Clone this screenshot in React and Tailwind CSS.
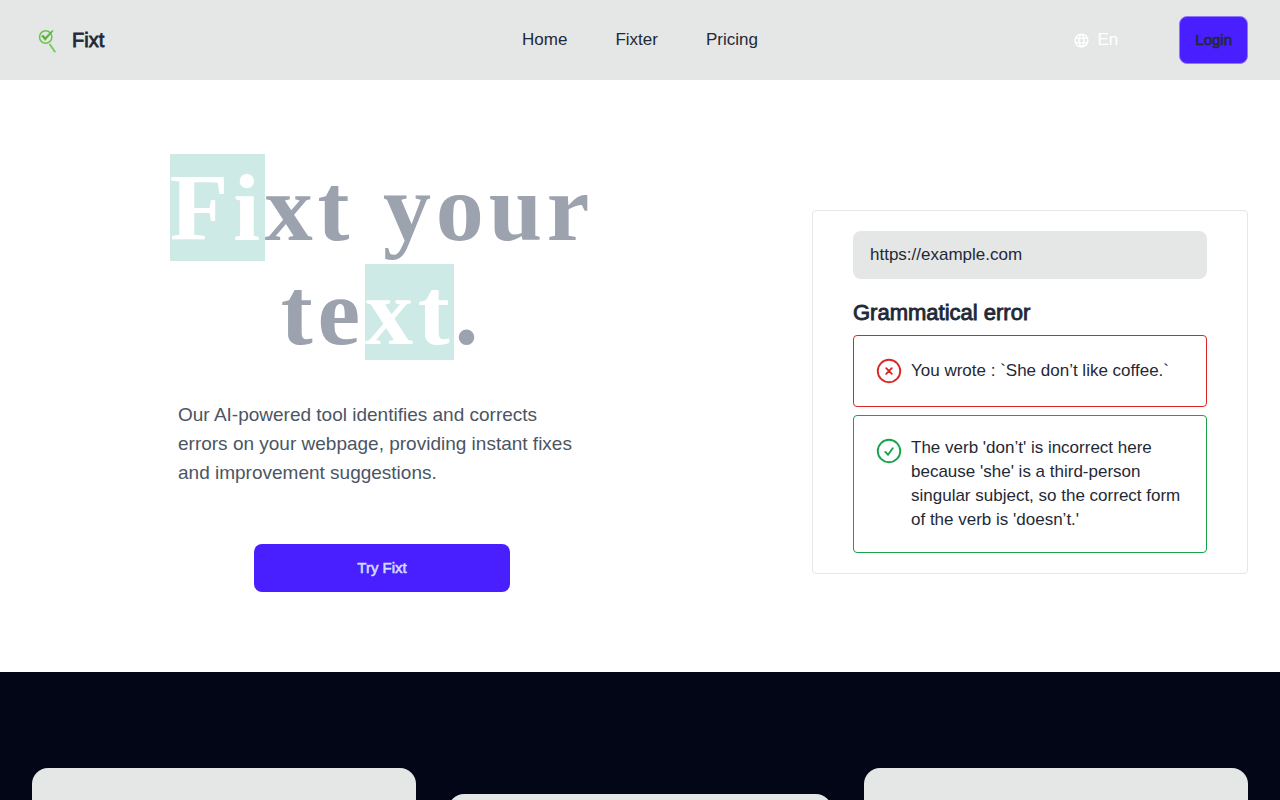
import { MdLanguage } from "react-icons/md";

const navLinks = ["Home", "Fixter", "Pricing"];

function Logo() {
  return (
    <svg className="size-8" viewBox="0 0 32 32" fill="none" aria-hidden="true">
      <circle cx="13.7" cy="13" r="6.2" stroke="#6cc455" strokeWidth="1.5" />
      <path d="M9.4 12 L11.2 11 L13.2 13.3 L20.6 6.3 L21.2 7 L13.2 16.6 Z" fill="#57b33a" stroke="#57b33a" strokeWidth="0.4" />
      <path d="M17.6 20 L23.2 28.2" stroke="#72cb55" strokeWidth="1.9" />
    </svg>
  );
}

function XCircle() {
  return (
    <svg className="size-[30px] shrink-0 text-[#dc2626]" viewBox="0 0 24 24" fill="none" stroke="currentColor" strokeWidth="1.5" strokeLinecap="round" strokeLinejoin="round" aria-hidden="true">
      <path d="m9.75 9.75 4.5 4.5m0-4.5-4.5 4.5M21 12a9 9 0 1 1-18 0 9 9 0 0 1 18 0Z" />
    </svg>
  );
}

function CheckCircle() {
  return (
    <svg className="size-[30px] shrink-0 text-[#16a34a]" viewBox="0 0 24 24" fill="none" stroke="currentColor" strokeWidth="1.5" strokeLinecap="round" strokeLinejoin="round" aria-hidden="true">
      <path d="M9 12.75 11.25 15 15 9.75M21 12a9 9 0 1 1-18 0 9 9 0 0 1 18 0Z" />
    </svg>
  );
}

function Header() {
  return (
    <header className="grid h-20 grid-cols-[1fr_auto_1fr] items-center bg-[#e5e6e6] px-8">
      <a href="#" className="flex items-center gap-2 text-[20px] [-webkit-text-stroke:0.04em_currentColor]">
        <Logo />
        Fixt
      </a>
      <nav className="flex gap-12">
        {navLinks.map((label) => (
          <a key={label} href="#">{label}</a>
        ))}
      </nav>
      <div className="flex items-center justify-end gap-[61px]">
        <button type="button" className="flex items-center gap-2 text-white">
          <MdLanguage className="size-[17px]" aria-hidden="true" />
          En
        </button>
        <button type="button" className="h-12 rounded-lg border border-[#8f78f8] bg-[#491eff] px-[15px] text-[15px] [-webkit-text-stroke:0.04em_currentColor]">
          Login
        </button>
      </div>
    </header>
  );
}

function Hero() {
  return (
    <section className="grid grid-cols-[700fr_436fr] items-center gap-20 bg-white px-8 pt-[76px] pb-20">
      <div className="flex flex-col items-center">
        <h1 className="max-w-[480px] text-center font-['Liberation_Serif',serif] text-[96px] leading-[104px] font-bold tracking-wider text-[#9ca3af]">
          <span className="bg-[#ceeae6] text-white">Fi</span>xt your te
          <span className="inline-block bg-[#ceeae6] leading-[96px] text-white">xt</span>.
        </h1>
        <p className="mt-9 max-w-[408px] text-[19px] leading-[29px] text-[#4b5563]">
          Our AI-powered tool identifies and corrects errors on your webpage, providing instant fixes and improvement suggestions.
        </p>
        <button type="button" className="mt-[57px] h-12 w-64 rounded-lg bg-[#491eff] text-[15px] text-[#d3dbff] [-webkit-text-stroke:0.04em_currentColor]">
          Try Fixt
        </button>
      </div>
      <div className="mt-9 rounded border border-[#e5e6e6] px-10 py-5">
        <input type="text" aria-label="Page address" defaultValue="https://example.com" className="h-12 w-full rounded-lg bg-[#e5e6e6] px-[17px]" />
        <h2 className="mt-5 text-[22px] leading-7 [-webkit-text-stroke:0.04em_currentColor]">Grammatical error</h2>
        <div className="mt-2 flex gap-[7px] rounded border border-[#dc2626] p-5">
          <XCircle />
          <p className="self-center">You wrote : `She don’t like coffee.`</p>
        </div>
        <div className="mt-2 flex gap-[7px] rounded border border-[#16a34a] p-5">
          <CheckCircle />
          <p>The verb 'don’t' is incorrect here because 'she' is a third-person singular subject, so the correct form of the verb is 'doesn’t.'</p>
        </div>
      </div>
    </section>
  );
}

export default function App() {
  return (
    <div className="min-h-screen bg-[#020617] font-['Liberation_Sans',Arial,sans-serif] text-[17px] leading-6 text-[#1f2937]">
      <Header />
      <Hero />
      <section className="grid grid-cols-3 gap-8 px-8 py-24">
        <div className="h-96 rounded-2xl bg-[#e5e6e6]" />
        <div className="mt-[26px] h-80 rounded-2xl bg-[#e5e6e6]" />
        <div className="h-96 rounded-2xl bg-[#e5e6e6]" />
      </section>
    </div>
  );
}
